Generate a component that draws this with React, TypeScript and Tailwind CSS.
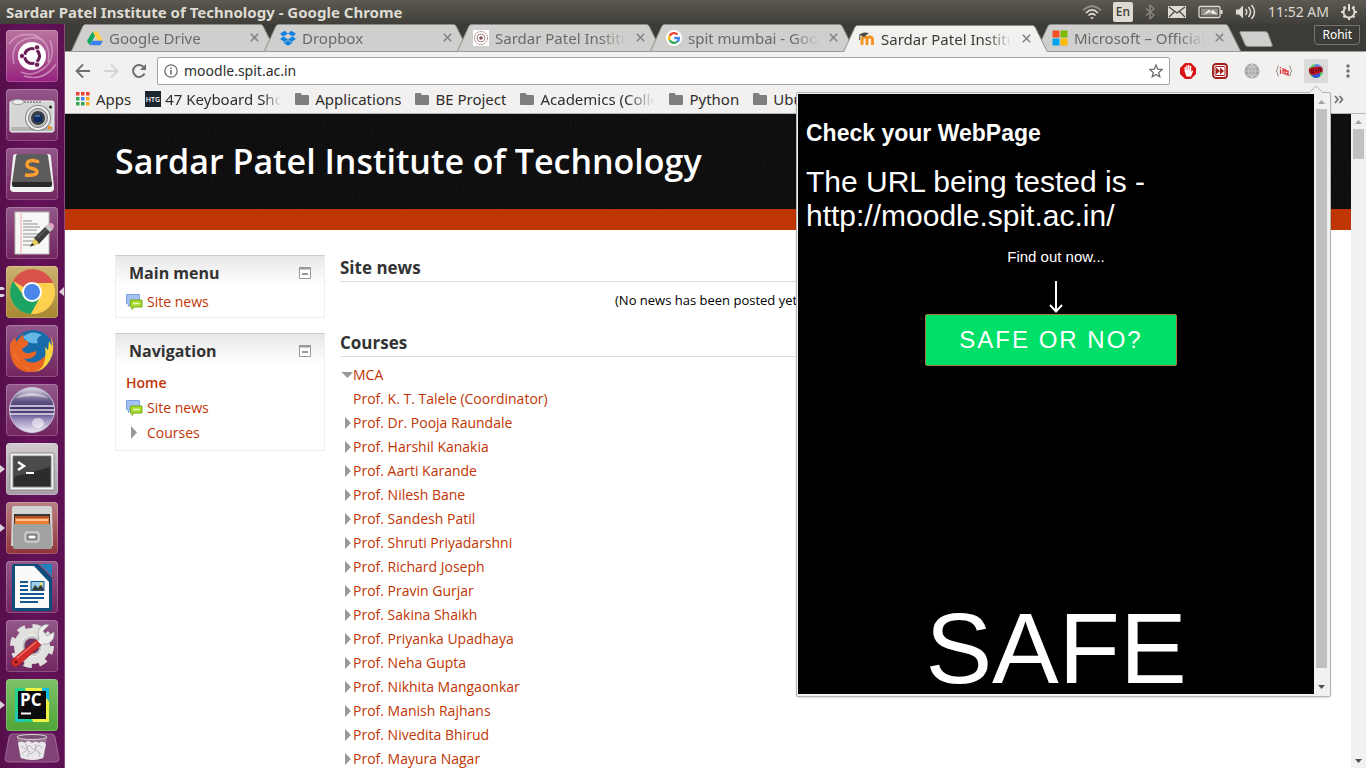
import type { ReactNode } from 'react';
import clsx from 'clsx';

const PROFESSORS = [
  'Prof. Dr. Pooja Raundale',
  'Prof. Harshil Kanakia',
  'Prof. Aarti Karande',
  'Prof. Nilesh Bane',
  'Prof. Sandesh Patil',
  'Prof. Shruti Priyadarshni',
  'Prof. Richard Joseph',
  'Prof. Pravin Gurjar',
  'Prof. Sakina Shaikh',
  'Prof. Priyanka Upadhaya',
  'Prof. Neha Gupta',
  'Prof. Nikhita Mangaonkar',
  'Prof. Manish Rajhans',
  'Prof. Nivedita Bhirud',
  'Prof. Mayura Nagar',
];

export default function App() {
  return (
    <div className="flex h-screen flex-col overflow-hidden bg-[#3c3b37] font-['Noto_Sans','Open_Sans',sans-serif]">
      <TitleBar />
      <div className="flex min-h-0 flex-1">
        <Launcher />
        <div className="relative flex min-w-0 flex-1 flex-col">
          <TabStrip />
          <Toolbar />
          <BookmarksBar />
          <div className="flex min-h-0 flex-1 bg-white">
            <MoodlePage />
            <Scrollbar>
              <div className="h-[30px] w-[11px] bg-[#c1c1c1]" />
            </Scrollbar>
          </div>
          <ExtensionPopup />
        </div>
      </div>
    </div>
  );
}

/* ---------- desktop panel ---------- */

function TitleBar() {
  return (
    <header className="flex h-6 shrink-0 items-center justify-between bg-linear-to-b from-[#5b5950] to-[#403f3a] pr-2 pl-1.5 text-[#dfdbd2]">
      <h1 className="text-[15px] leading-6 font-bold">Sardar Patel Institute of Technology - Google Chrome</h1>
      <div className="flex items-center gap-[11px]">
        <svg width="20" height="16" viewBox="0 0 20 16" fill="none" stroke="currentColor" strokeWidth="1.7">
          <path d="M1 6.5Q10-2 19 6.5" opacity=".45" />
          <path d="M4 9Q10 3 16 9" />
          <path d="M6.5 11.5Q10 8 13.5 11.5" />
          <path d="M8 13.2h4L10 15.5z" fill="currentColor" stroke="none" />
        </svg>
        <span className="flex h-5 w-5 items-center justify-center rounded-xs bg-[#dfdbd2] text-[12px] font-medium text-[#3c3b37]">En</span>
        <svg width="12" height="16" viewBox="0 0 12 16" fill="none" stroke="#8c8a82" strokeWidth="1.3">
          <path d="M2 4.5l8 6.5-4 4V1l4 4-8 6.5" />
        </svg>
        <svg width="20" height="14" viewBox="0 0 20 14">
          <rect x="1" y="1" width="18" height="12" fill="#dfdbd2" />
          <path d="M2 2l8 6 8-6M2 12l5.500-5.500M18 12l-5.500-5.500" fill="none" stroke="#4a4943" strokeWidth="1.3" />
        </svg>
        <svg width="26" height="14" viewBox="0 0 26 14" fill="none">
          <rect x="1" y="1.500" width="21" height="11" rx="1.500" stroke="#dfdbd2" strokeWidth="1.300" />
          <path d="M23.500 5v4" stroke="#dfdbd2" strokeWidth="2" />
          <rect x="3" y="3.500" width="17" height="7" fill="#8f8d86" />
          <path d="M5 10l6-5.500 2.500 2.500 1-2.500 5 5-6-1-1-1.500z" fill="#f3f0e8" />
        </svg>
        <svg width="22" height="16" viewBox="0 0 22 16" fill="none" stroke="#dfdbd2" strokeWidth="1.500">
          <path d="M1 5.500h3l4-4v13l-4-4H1z" fill="#dfdbd2" stroke="none" />
          <path d="M10.500 5q2.500 3 0 6M13.500 3q4 5 0 10M16.500 1q6 7 0 14" />
        </svg>
        <time className="text-[14px] leading-6">11:52 AM</time>
        <svg width="18" height="18" viewBox="0 0 18 18" fill="none" stroke="#dfdbd2">
          <path d="M6 4.400a5.500 5.500 0 1 0 6 0" strokeWidth="2" />
          <path d="M9 1v7" strokeWidth="2" />
          <path d="M3.600 3.600l1.500 1.500M14.400 3.600l-1.500 1.500M1 9h2.500M14.500 9H17M3.600 14.400l1.500-1.500M14.400 14.400l-1.500-1.500M9 14v3" strokeWidth="2.200" />
        </svg>
      </div>
    </header>
  );
}

/* ---------- launcher ---------- */

function Launcher() {
  return (
    <nav aria-label="Launcher" className="flex w-[65px] shrink-0 flex-col items-center border-r border-[#8b4b7e] bg-linear-to-r from-[#560f4b] via-[#65125a] to-[#5c1052] pt-1.5">
      <div className="flex flex-col gap-[7px]">
        <Tile label="Dash" className="bg-linear-to-b from-[#b9749f] to-[#97207f]"><DashIcon /></Tile>
        <Tile label="Camera"><CameraIcon /></Tile>
        <Tile label="Sublime Text"><SublimeIcon /></Tile>
        <Tile label="Text editor"><EditorIcon /></Tile>
        <Tile label="Chrome" windows={2} focused className="bg-linear-to-b from-[#cbb26f] to-[#a8872f]"><ChromeIcon /></Tile>
        <Tile label="Firefox"><FirefoxIcon /></Tile>
        <Tile label="Eclipse"><EclipseIcon /></Tile>
        <Tile label="Terminal" windows={1} className="bg-linear-to-b from-[#d1cbd0] to-[#a79fa6]"><TerminalIcon /></Tile>
        <Tile label="Files" windows={1} className="bg-linear-to-b from-[#b88084] to-[#8f3339]"><FilesIcon /></Tile>
        <Tile label="Writer"><WriterIcon /></Tile>
        <Tile label="Settings"><SettingsIcon /></Tile>
        <Tile label="PyCharm" windows={1} className="bg-linear-to-b from-[#7fc069] to-[#4fa535]"><PyCharmIcon /></Tile>
      </div>
      <button type="button" aria-label="Trash" className="mt-0.5">
        <svg width="56" height="30" viewBox="0 0 56 30" className="block">
          <path d="M8 1h40q2 0 3 3l4 22q0 3-3 3H4q-3 0-3-3L5 4q1-3 3-3z" fill="#814277" stroke="#9c6593" />
          <path d="M13 4l3 21q12 4 24 0l3-21z" fill="#a58aa0" opacity=".7" />
          <ellipse cx="28" cy="4" rx="15" ry="2.500" fill="#75506e" stroke="#dcd3da" />
          <path d="M14 10q3-3 7 0 3-4 7 0 4-3 7 0 4-3 7 1l-3 14q-10 4-22 0z" fill="#e9e7e9" />
          <path d="M17 13l5 3 3-4 5 5 5-5 3 3M18 21l5-4 4 4 5-4 5 4M22 11l2 6M32 11l-1 7M26 18l-3 6M34 18l2 6" fill="none" stroke="#bcb7bc" />
        </svg>
      </button>
    </nav>
  );
}

function Tile({
  label,
  windows = 0,
  focused = false,
  className = 'bg-linear-to-b from-[#93588a] to-[#71245f]',
  children,
}: {
  label: string;
  windows?: number;
  focused?: boolean;
  className?: string;
  children: ReactNode;
}) {
  return (
    <div className="relative">
      <button type="button" aria-label={label} className={clsx('block size-[52px] rounded-sm inset-ring inset-ring-white/20', className)}>
        <svg width="52" height="52" viewBox="0 0 52 52" className="block">{children}</svg>
      </button>
      {windows > 0 ? (
        <svg width="5" height="14" viewBox="0 0 5 14" className="absolute top-[19px] -left-1.5" fill="#dcd3da">
          {windows === 1 ? <path d="M0 3l5 4-5 4z" /> : <path d="M0 2h3l2 2-2 1H0zM0 9h3l2 1-2 2H0z" />}
        </svg>
      ) : null}
      {focused ? (
        <svg width="5" height="10" viewBox="0 0 5 10" className="absolute top-[21px] -right-1.5" fill="#dcd3da">
          <path d="M5 0v9L0 5z" />
        </svg>
      ) : null}
    </div>
  );
}

function DashIcon() {
  return (
    <>
      <g fill="none" stroke="#e3b9d6" strokeWidth="1.500" opacity=".6">
        <path d="M8 34Q3 12 24 8Q34 7 39 13M44 10Q52 32 32 42Q24 46 15 42M3 14Q10 2 28 5Q46 12 42 32M50 34Q38 52 18 46" />
      </g>
      <circle cx="26" cy="26" r="14" fill="#fff" />
      <circle cx="26" cy="26" r="7.500" fill="none" stroke="#6b1b55" strokeWidth="3.200" />
      <path d="M26 26L14 26M26 26L32 36.400M26 26L32 15.600" stroke="#fff" strokeWidth="2" />
      <circle cx="26" cy="26" r="5.500" fill="#fff" />
      <g fill="#6b1b55" stroke="#fff" strokeWidth=".8">
        <circle cx="16" cy="26" r="2.600" />
        <circle cx="31" cy="17.300" r="2.600" />
        <circle cx="31" cy="34.700" r="2.600" />
      </g>
    </>
  );
}

function CameraIcon() {
  return (
    <>
      <rect x="4" y="12" width="44" height="31" rx="2" fill="#d6d6d4" stroke="#f4f4f4" />
      <path d="M5 38h42v4H5z" fill="#b4b4b2" />
      <ellipse cx="12" cy="13" rx="6" ry="2.500" fill="#eee" stroke="#999" />
      <path d="M18 13h18" stroke="#555" strokeDasharray="2 1" />
      <circle cx="32" cy="29" r="12.500" fill="#f0f0ef" stroke="#8c8c8b" strokeWidth="1.200" />
      <circle cx="32" cy="29" r="9.500" fill="#c2c2c2" stroke="#777" />
      <circle cx="32" cy="29" r="7" fill="#3a3d42" />
      <rect x="28" y="26" width="8" height="7" rx="1" fill="#0d2c63" />
      <path d="M29 27h5" stroke="#79a7df" />
      <circle cx="44.500" cy="18" r="1.500" fill="#222" />
      <rect x="42" y="37" width="3" height="3" fill="#f3901d" />
    </>
  );
}

function SublimeIcon() {
  return (
    <>
      <path d="M7 9q0-3 3-3h32q3 0 3 3l3 31q0 4-4 4H8q-4 0-4-4z" fill="#f1f1f1" />
      <path d="M10 8q0-2 2-2h28q2 0 2 2l4 27H6z" fill="#5c5c5c" />
      <path d="M6 34h40v3q0 2-2 2H8q-2 0-2-2z" fill="#292929" />
      <path d="M33 13q-2 1-5-.5-7-.5-7 4 0 3 5 4 5 1 5 3.500 0 4-12 3" fill="none" stroke="#ff9f2f" strokeWidth="3.400" />
    </>
  );
}

function EditorIcon() {
  return (
    <>
      <rect x="9" y="5" width="34" height="42" fill="#f7f7f5" stroke="#bdbab6" />
      <path d="M15 6v40" stroke="#f2a5a5" />
      <path d="M17 14h9M17 17h15M17 20h17M17 23h14M17 27h16M17 30h13M17 34h10M17 38h12" stroke="#8f8f8f" strokeWidth="1" />
      <path d="M25 39l3-8 4 3 2 3z" fill="#e9ca58" />
      <path d="M28 31l12-12 5 5-12 13-2-3z" fill="#3e3e3c" />
      <path d="M31 31l11-10" stroke="#777" />
      <path d="M39 20l3-3 5 5-3 3z" fill="#c9c9c9" />
      <path d="M42 17q3-2 5 0t0 5z" fill="#e6a4c8" />
      <path d="M24 40l2-4 2 2z" fill="#222" />
    </>
  );
}

function ChromeIcon() {
  return (
    <>
      <circle cx="26" cy="26" r="22" fill="#fdd04f" />
      <path d="M26 26L7 15A22 22 0 0 1 47 17H26z" fill="#d9534c" />
      <path d="M7 15A22 22 0 0 0 25 48L34 31 18 30z" fill="#1da462" />
      <path d="M26 17h21A22 22 0 0 1 25 48l10-17z" fill="#fdd04f" />
      <circle cx="26" cy="26" r="10" fill="#fff" />
      <circle cx="26" cy="26" r="8" fill="#4a86ea" />
    </>
  );
}

function FirefoxIcon() {
  return (
    <>
      <circle cx="27" cy="25" r="20" fill="#176bab" />
      <path d="M17 12Q26 4 36 10Q29 13 32 18Q22 20 17 12z" fill="#65b8e4" />
      <path d="M45 11q5 14-1 24-6 12-18 12 16-6 13-25l3 3 1-9 3 5z" fill="#fbd53c" />
      <path d="M4 19l5-7 1 5 7-8 1 6q5 0 4 5l-6 4q1 5 8 4l6-2q1 5-5 7-5 2-8 0 10 10 22-2 0 17-18 16Q3 44 4 19z" fill="#eb6423" />
      <path d="M7 23q2 17 18 22-10-2-14-11-3-5-4-11z" fill="#f8993a" />
    </>
  );
}

function EclipseIcon() {
  return (
    <>
      <defs>
        <linearGradient id="eclipse" x2="0" y2="1">
          <stop offset="0" stopColor="#dedbe8" />
          <stop offset=".3" stopColor="#645787" />
          <stop offset=".5" stopColor="#382c63" />
          <stop offset=".7" stopColor="#9489b8" />
          <stop offset="1" stopColor="#eeeaf5" />
        </linearGradient>
      </defs>
      <circle cx="26" cy="26" r="22.500" fill="url(#eclipse)" stroke="#cdc7db" />
      <path d="M4 22h44M4 26h44M4 30h44" stroke="#e6e1f0" strokeWidth="1.600" />
      <path d="M10 14q15-10 32 0-16-4-32 0z" fill="#fff" opacity=".5" />
      <ellipse cx="32" cy="39" rx="6" ry="5" fill="#fff" opacity=".55" />
    </>
  );
}

function TerminalIcon() {
  return (
    <>
      <rect x="4" y="10" width="44" height="37" rx="1.500" fill="#f5f5f5" stroke="#878787" />
      <rect x="7" y="13" width="38" height="31" fill="#2c2c2c" stroke="#888" />
      <path d="M8 14h36v10L8 34z" fill="#4a4a4a" />
      <path d="M12 19l6 4-6 4" fill="none" stroke="#fff" strokeWidth="2.400" />
      <path d="M20 30h8" stroke="#fff" strokeWidth="2" />
    </>
  );
}

function FilesIcon() {
  return (
    <>
      <path d="M6 6q0-2 2-2h36q2 0 2 2l1 38H5z" fill="#d2d2d0" />
      <rect x="8" y="12" width="36" height="12" fill="#3b3634" />
      <path d="M9 14h34v9H9z" fill="#a75327" />
      <path d="M9 16h34v8H9z" fill="#ef7d2d" />
      <path d="M10 18h32" stroke="#fff" />
      <path d="M7 22h38l1 23q0 2-2 2H9q-2 0-2-2z" fill="#a1a1a0" />
      <rect x="19" y="30" width="14" height="10" rx="2" fill="#ababaa" stroke="#e5e5e4" />
      <rect x="22" y="33" width="8" height="4" fill="#fff" stroke="#555" />
    </>
  );
}

function WriterIcon() {
  return (
    <>
      <path d="M8 3h24l14 14v31q0 2-2 2H8q-2 0-2-2V5q0-2 2-2z" fill="#0f4c7e" />
      <path d="M9 5h19l15 16v26H9z" fill="#fafafa" />
      <path d="M34 3h12v12z" fill="#1d82bd" />
      <path d="M14 21h8M14 25h8M14 29h8M14 33h24M14 37h24M14 41h18" stroke="#14588f" strokeWidth="2" />
      <rect x="25" y="20.500" width="13" height="9" fill="#9ccdea" stroke="#14588f" />
      <path d="M26 29l3-5 3 3 3-4 3 6z" fill="#373b38" />
      <circle cx="35" cy="23" r="1.500" fill="#fbe14b" />
    </>
  );
}

function SettingsIcon() {
  return (
    <>
      <circle cx="26" cy="26" r="19.500" fill="none" stroke="#e0e0de" strokeWidth="5" strokeDasharray="8 7.300" />
      <circle cx="26" cy="26" r="13.500" fill="none" stroke="#e0e0de" strokeWidth="9" />
      <circle cx="26" cy="26" r="11" fill="#cfcfcd" stroke="#f4f4f3" />
      <circle cx="26" cy="26" r="8" fill="#713364" stroke="#aaa" />
      <path d="M29 24l4-5q-3-9 3-13 4-3 7-1l-6 6 4 5 7-4q1 8-5 11-3 2-6 1l-5 4z" fill="#ececec" stroke="#999" strokeWidth=".7" />
      <path d="M30 20l5 5-22 20q-4 3-7 0-2-3 1-6z" fill="#d32c2c" stroke="#9f1b1b" strokeWidth=".7" />
      <path d="M11 38l19-16" stroke="#f0766e" strokeWidth="1.500" />
      <circle cx="10" cy="42" r="1.500" fill="#6a1010" />
    </>
  );
}

function PyCharmIcon() {
  return (
    <>
      <rect x="9" y="9" width="34" height="34" fill="#21d18d" />
      <path d="M19 9h19l5 14v20H27z" fill="#eef043" />
      <path d="M36 9h7v13l-7-7z" fill="#12b8e5" />
      <path d="M9 31l10 12H9z" fill="#21c6bd" />
      <rect x="12" y="12" width="28" height="28" fill="#0b0b0b" />
      <text x="14" y="27" fill="#fff" fontFamily="Open Sans" fontSize="17" fontWeight="700">PC</text>
      <path d="M15 34.500h10" stroke="#fff" strokeWidth="2" />
    </>
  );
}

/* ---------- browser chrome ---------- */

function TabStrip() {
  return (
    <div className="flex h-7 shrink-0 items-end justify-between border-b border-[#9b9b99] pr-1.5 pl-1.5">
      <div className="flex items-end">
        <Tab title="Google Drive"><DriveIcon /></Tab>
        <Tab title="Dropbox"><DropboxIcon /></Tab>
        <Tab title="Sardar Patel Institute">
          <rect width="16" height="16" fill="#fff" />
          <g fill="none" stroke="#a98686">
            <circle cx="8" cy="8" r="6.500" strokeDasharray="2 .6" />
            <circle cx="8" cy="8" r="4" />
          </g>
          <circle cx="8" cy="8" r="1.800" fill="#854d4d" />
        </Tab>
        <Tab title="spit mumbai - Google"><GoogleIcon /></Tab>
        <Tab title="Sardar Patel Institute" active><MoodleIcon /></Tab>
        <Tab title="Microsoft – Official">
          <path d="M.5.500h7v7h-7z" fill="#f25022" />
          <path d="M8.500.500h7v7h-7z" fill="#7fba00" />
          <path d="M.5 8.500h7v7h-7z" fill="#00a4ef" />
          <path d="M8.500 8.500h7v7h-7z" fill="#ffb900" />
        </Tab>
        <button type="button" aria-label="New tab" className="mb-1 ml-2.5">
          <svg width="34" height="16" viewBox="0 0 34 16" className="block">
            <path d="M2 .5h24q2 0 3 2l4 11q1 2-1 2H9q-2 0-3-2L1 2Q.5.500 2 .5z" fill="#d0cfcd" stroke="#8e8d8a" />
          </svg>
        </button>
      </div>
      <button type="button" className="mb-1.5 h-5 rounded-b-sm border border-[#77766f] bg-[#3c3b37] px-[7px] text-[12px] leading-[18px] text-white">
        Rohit
      </button>
    </div>
  );
}

function Tab({ title, active = false, children }: { title: string; active?: boolean; children: ReactNode }) {
  return (
    <div className={clsx('relative -mr-3 flex h-[27px] w-[205px] items-center pr-[17px] pl-4', active && 'z-10 -mb-px h-7')}>
      <svg viewBox="0 0 205 28" preserveAspectRatio="none" className="absolute inset-0 size-full">
        <path d="M.5 28L12 2Q13 .5 15 .5h174q2 0 3 1.500L204.500 28" fill={active ? '#f2f1f0' : '#d0cfcd'} stroke="#8e8d8a" />
      </svg>
      <svg width="16" height="16" viewBox="0 0 16 16" className="relative shrink-0">{children}</svg>
      <span className={clsx('relative ml-1.5 w-[131px] overflow-hidden mask-r-from-80% text-[15px] leading-5 whitespace-nowrap', active ? 'text-[#3c3b37]' : 'text-[#6b6a68]')}>
        {title}
      </span>
      <button type="button" aria-label="Close tab" className="relative ml-auto">
        <svg width="9" height="9" viewBox="0 0 9 9" stroke="#858483" strokeWidth="1.600" className="block">
          <path d="M.8.800l7.400 7.400M8.200.800L.8 8.200" />
        </svg>
      </button>
    </div>
  );
}

function DriveIcon() {
  return (
    <>
      <path d="M5.500 1.500h5L16 11h-5z" fill="#ffcf48" />
      <path d="M5.500 1.500L8 6 2.700 15.200 0 11z" fill="#11a861" />
      <path d="M5.300 10.800H16l-2.600 4.400H2.700z" fill="#3e82f1" />
    </>
  );
}

function DropboxIcon() {
  return (
    <path
      d="M4.700.800L0 3.800l3.300 2.600L8 3.500zM11.300.800L8 3.500l4.700 2.900L16 3.800zM0 9l4.700 3L8 9.300 3.300 6.400zM8 9.300l3.300 2.700L16 9l-3.300-2.600zM8 10l-3.300 2.700-1.400-.9v1L8 15.700l4.700-2.900v-1l-1.400.9z"
      fill="#1081de"
    />
  );
}

function GoogleIcon() {
  return (
    <>
      <circle cx="8" cy="8" r="8" fill="#fff" />
      <g fill="none" strokeWidth="2.400">
        <path d="M11.500 4.500A4.900 4.900 0 0 0 3.700 5.800" stroke="#ea4335" />
        <path d="M3.700 5.700a4.900 4.900 0 0 0 0 4.600" stroke="#fbbc05" />
        <path d="M3.700 10.200A4.900 4.900 0 0 0 11.200 11.700" stroke="#34a853" />
        <path d="M11.200 11.700Q13 10.200 12.900 8H8.200" stroke="#4285f4" />
      </g>
    </>
  );
}

function MoodleIcon() {
  return (
    <>
      <path d="M3 14V8q0-2 2.500-2T8 8.500V14M8 14V8.500Q8 6 10.700 6t2.800 2.500V14" fill="none" stroke="#f2941c" strokeWidth="2.800" />
      <path d="M0 3.500L5 1.500l5 .5-5 4z" fill="#4a4a48" />
      <path d="M1 4l-.5 5" stroke="#4a4a48" />
    </>
  );
}

function Toolbar() {
  return (
    <div className="flex h-[37px] shrink-0 items-center bg-[#f2f1f0] pr-1.5 pl-[10px]">
      <div className="flex shrink-0 items-center gap-3 pr-[10px]">
        <button type="button" aria-label="Back">
          <svg width="16" height="16" viewBox="0 0 16 16" fill="none" stroke="#6f6e6c" strokeWidth="1.800" className="block">
            <path d="M15 8H2M8 1.500L1.500 8 8 14.500" />
          </svg>
        </button>
        <button type="button" aria-label="Forward">
          <svg width="16" height="16" viewBox="0 0 16 16" fill="none" stroke="#d5d4d2" strokeWidth="1.800" className="block">
            <path d="M1 8h13M8 1.500L14.500 8 8 14.500" />
          </svg>
        </button>
        <button type="button" aria-label="Reload">
          <svg width="16" height="16" viewBox="0 0 16 16" fill="none" stroke="#6f6e6c" strokeWidth="2" className="block">
            <path d="M13.500 10.500A6 6 0 1 1 13 4.500" />
            <path d="M15 1v6H9z" fill="#6f6e6c" stroke="none" />
          </svg>
        </button>
      </div>
      <label className="flex h-7 min-w-0 flex-1 items-center rounded-xs border border-[#a5a4a2] bg-white px-1.5">
        <svg width="14" height="14" viewBox="0 0 14 14" fill="none" stroke="#6f6e6c" className="shrink-0">
          <circle cx="7" cy="7" r="6.200" strokeWidth="1.300" />
          <path d="M7 6v4.500M7 3.500v1.400" strokeWidth="1.600" />
        </svg>
        <input
          type="text"
          aria-label="Address"
          defaultValue="moodle.spit.ac.in"
          className="ml-1.5 min-w-0 flex-1 text-[14px] leading-5 text-[#2e2e2c] outline-none"
        />
        <svg width="14" height="14" viewBox="0 0 14 14" fill="none" stroke="#6f6e6c" strokeWidth="1.300" className="shrink-0">
          <path d="M7 1l1.700 4.200 4.500.3-3.500 2.900 1.100 4.400L7 10.400l-3.800 2.400 1.100-4.400L.8 5.500l4.500-.3z" />
        </svg>
      </label>
      <div className="ml-1.5 flex shrink-0 items-center gap-2">
        <Extension label="Ad blocker">
          <path d="M5 0h6l5 5v6l-5 5H5l-5-5V5z" fill="#da1414" />
          <path d="M4.500 8V4h1.300v3h.4V2.500h1.400V7H8V2h1.400v5h.4V3h1.400v6l1-1.500 1 .5-2.200 5.500H6.500z" fill="#fff" />
        </Extension>
        <Extension label="Skip">
          <rect x="1" y="1" width="14" height="14" rx="3" fill="#fff" stroke="#a31c1c" strokeWidth="1.800" />
          <rect x="3" y="3.500" width="10" height="9" rx="1" fill="#fff" stroke="#a31c1c" />
          <path d="M4 4.500l4 3.500-4 3.500zM8 4.500l4 3.500-4 3.500z" fill="#a31c1c" />
        </Extension>
        <Extension label="Web">
          <circle cx="8" cy="8" r="7.500" fill="#a4a4a3" />
          <path d="M1 8h14M8 1v14M2.500 4h11M2.500 12h11M8 .5q-7 7.500 0 15 7-7.500 0-15" fill="none" stroke="#cfcfce" />
        </Extension>
        <Extension label="Snippets">
          <path d="M3 3Q1.500 3 1.500 5t-1.300 3q1.300 1 1.300 3T3 13M13 3q1.500 0 1.500 2t1.300 3q-1.300 1-1.300 3T13 13" fill="none" stroke="#8d8d8c" />
          <path d="M4.500 6.500V11M4.500 4v1.300M7 5v6M7 8l3-2M9 8h3v3H9zM12 11v2" fill="none" stroke="#e0383f" strokeWidth="1.300" />
        </Extension>
        <Extension label="Safe or no" selected>
          <circle cx="8" cy="8" r="7" fill="#4bd35a" />
          <path d="M8 1a7 7 0 0 1 7 7v2L6 3z" fill="#6d86f4" />
          <path d="M3 11l2 3q3 2 7-.5L12 9z" fill="#3154dd" />
          <path d="M1 5.500q6-3 13-1.500l1 4q-5 4-12 4-3-3-2-6.500z" fill="#c21626" />
          <path d="M3 6.500l3-.5M3 8l3-.5M3 9.800l3-.5M3.200 6.500v3M8.200 5.500l-.5 4M10.500 9V5.500q2-1 2 0V9" fill="none" stroke="#5e0712" />
        </Extension>
        <button type="button" aria-label="Menu" className="flex size-6 items-center justify-center">
          <svg width="4" height="14" viewBox="0 0 4 14" fill="#6f6e6c" className="block">
            <circle cx="2" cy="2" r="1.700" />
            <circle cx="2" cy="7" r="1.700" />
            <circle cx="2" cy="12" r="1.700" />
          </svg>
        </button>
      </div>
    </div>
  );
}

function Extension({ label, selected = false, children }: { label: string; selected?: boolean; children: ReactNode }) {
  return (
    <button type="button" aria-label={label} className={clsx('flex size-6 items-center justify-center rounded-xs', selected && 'bg-[#dbdad9]')}>
      <svg width="16" height="16" viewBox="0 0 16 16" className="block">{children}</svg>
    </button>
  );
}

function BookmarksBar() {
  return (
    <div className="flex h-[25px] shrink-0 items-center justify-between border-b border-[#b6b5b3] bg-[#f2f1f0] pr-[22px] pb-1 pl-[11px] text-[15px] leading-5 text-[#2e2e2c]">
      <div className="flex items-center gap-[14px]">
        <a href="#apps" className="flex items-center gap-1.5">
          <svg width="14" height="14" viewBox="0 0 14 14" className="block">
            <path d="M0 0h3.500v3.500H0zM5 0h3.500v3.500H5zM10 0h3.500v3.500H10z" fill="#ea4335" />
            <path d="M0 5h3.500v3.500H0zM0 10h3.500v3.500H0zM5 10h3.500v3.500H5z" fill="#34a853" />
            <path d="M5 5h3.500v3.500H5z" fill="#4285f4" />
            <path d="M10 5h3.500v3.500H10zM10 10h3.500v3.500H10z" fill="#fbae17" />
          </svg>
          Apps
        </a>
        <a href="#htg" className="flex w-[136px] items-center gap-1">
          <svg width="16" height="16" viewBox="0 0 16 16" className="block shrink-0">
            <rect width="16" height="16" fill="#1b2530" />
            <text x="8" y="11" fill="#fff" textAnchor="middle" fontFamily="Open Sans" fontSize="7" fontWeight="600">HTG</text>
          </svg>
          <span className="overflow-hidden mask-r-from-85% whitespace-nowrap">47 Keyboard Shortcuts</span>
        </a>
        <Folder name="Applications" />
        <Folder name="BE Project" />
        <Folder name="Academics (College)" className="w-[135px]" fade />
        <Folder name="Python" />
        <Folder name="Ubuntu" />
      </div>
      <button type="button" aria-label="More bookmarks">
        <svg width="10" height="9" viewBox="0 0 10 9" fill="none" stroke="#6f6e6c" strokeWidth="1.700" className="block">
          <path d="M1 1l3 3.500L1 8M5.500 1l3 3.500-3 3.500" />
        </svg>
      </button>
    </div>
  );
}

function Folder({ name, className, fade = false }: { name: string; className?: string; fade?: boolean }) {
  return (
    <a href="#folder" className={clsx('flex items-center gap-1.5', className)}>
      <svg width="14" height="12" viewBox="0 0 14 12" fill="#7f7e7c" className="block shrink-0">
        <path d="M1 0h4.500L7 2h6q1 0 1 1v8q0 1-1 1H1q-1 0-1-1V1q0-1 1-1z" />
      </svg>
      <span className={clsx('overflow-hidden whitespace-nowrap', fade && 'mask-r-from-75%')}>{name}</span>
    </a>
  );
}

function Scrollbar({ children }: { children: ReactNode }) {
  return (
    <div className="flex w-[15px] shrink-0 flex-col items-center bg-[#f1f1f1]">
      <svg width="15" height="15" viewBox="0 0 15 15" fill="#a3a3a3" className="block shrink-0">
        <path d="M4 10h7L7.500 6z" />
      </svg>
      <div className="flex min-h-0 flex-1 flex-col">{children}</div>
      <svg width="15" height="15" viewBox="0 0 15 15" fill="#505050" className="block shrink-0">
        <path d="M4 6h7l-3.500 4z" />
      </svg>
    </div>
  );
}

/* ---------- moodle page ---------- */

function MoodlePage() {
  return (
    <div className="min-w-0 flex-1 overflow-hidden text-[14px] font-['Open_Sans',sans-serif]">
      <div className="relative border-b-[21px] border-[#bf3504] bg-[#080808]">
        <svg className="absolute inset-0 size-full opacity-8">
          <filter id="grain">
            <feTurbulence type="fractalNoise" baseFrequency=".6" numOctaves="2" />
            <feColorMatrix type="saturate" values="0" />
          </filter>
          <rect width="100%" height="100%" filter="url(#grain)" />
        </svg>
        <h2 className="relative px-[50px] pt-[23px] pb-6 text-[34px] leading-12 font-semibold text-white">
          Sardar Patel Institute of Technology
        </h2>
      </div>
      <div className="flex gap-[15px] px-[50px] pt-[25px]">
        <aside className="flex w-[210px] shrink-0 flex-col gap-[15px]">
          <Block title="Main menu">
            <a href="#news" className="flex items-center gap-1 leading-5"><ForumIcon />Site news</a>
          </Block>
          <Block title="Navigation">
            <ul className="leading-[25px]">
              <li><a href="#home" className="font-semibold">Home</a></li>
              <li><a href="#news" className="flex items-center gap-1"><ForumIcon />Site news</a></li>
              <li>
                <a href="#courses" className="flex items-center gap-1">
                  <svg width="17" height="13" viewBox="0 0 17 13" fill="#999" className="block"><path d="M5 0l6 6.500L5 13z" /></svg>
                  Courses
                </a>
              </li>
            </ul>
          </Block>
        </aside>
        <main className="min-w-0 flex-1">
          <SectionTitle>Site news</SectionTitle>
          <p className="pt-2 pb-5 text-center text-[13px] leading-5 text-black">(No news has been posted yet)</p>
          <SectionTitle>Courses</SectionTitle>
          <ul className="pt-1.5 leading-6 text-[#c03504]">
            <li className="flex items-center">
              <svg width="13" height="6" viewBox="0 0 13 6" fill="#999" className="block"><path d="M1.500 0H13L7.500 6z" /></svg>
              <a href="#mca">MCA</a>
            </li>
            <li className="pl-[13px]"><a href="#talele">Prof. K. T. Talele (Coordinator)</a></li>
            {PROFESSORS.map((name) => (
              <li key={name} className="flex items-center">
                <svg width="13" height="12" viewBox="0 0 13 12" fill="#999" className="block"><path d="M5 0l6 6-6 6z" /></svg>
                <a href="#course">{name}</a>
              </li>
            ))}
          </ul>
        </main>
        <aside className="w-[210px] shrink-0" />
      </div>
    </div>
  );
}

function SectionTitle({ children }: { children: ReactNode }) {
  return <h3 className="border-b border-[#ddd] text-[17px] leading-[26px] font-bold text-[#333]">{children}</h3>;
}

function Block({ title, children }: { title: string; children: ReactNode }) {
  return (
    <section className="border border-[#eee] border-t-[#ccc] bg-linear-to-b from-[#e8e8e8] to-white to-[30px] px-[10px] pb-[5px] text-[#c03504]">
      <div className="flex items-center justify-between px-[3px] pt-[3px] pb-[5px]">
        <h3 className="text-[16px] leading-[28px] font-bold text-[#333]">{title}</h3>
        <button type="button" aria-label="Collapse">
          <svg width="12" height="12" viewBox="0 0 12 12" className="block">
            <path d="M.5.500h11v11H.5z" fill="#fff" stroke="#999" />
            <path d="M0 1.500h12M3 7h6" stroke="#999" strokeWidth="2" />
          </svg>
        </button>
      </div>
      {children}
    </section>
  );
}

function ForumIcon() {
  return (
    <svg width="17" height="16" viewBox="0 0 17 16" className="block shrink-0">
      <path d="M.5.500h13v9h-9l-2 3-.5-3H.5z" fill="#a3c2f2" stroke="#7da5e4" />
      <path d="M4.500 6h11.500v7H8l-2 2.500V13H4.500z" fill="#a6d92c" stroke="#79ae14" />
      <path d="M7 9.500h6.500" stroke="#e9fbc4" strokeWidth="1.500" />
    </svg>
  );
}

/* ---------- extension popup ---------- */

function ExtensionPopup() {
  return (
    <div className="absolute top-[68px] right-[35px] z-20 flex h-[605px] w-[535px] rounded-xs border border-[#b5b4b2] bg-[#f2f1f0] p-px pb-0.5 font-['Liberation_Sans',Arial,sans-serif] text-white shadow-sm">
      <svg width="16" height="8" viewBox="0 0 16 8" className="absolute -top-2 right-1.5">
        <path d="M1 8l7-7 7 7" fill="#f2f1f0" stroke="#b5b4b2" />
      </svg>
      <div className="flex min-w-0 flex-1 flex-col overflow-hidden bg-black px-2">
        <h2 className="pt-[27px] text-[23px] leading-6 font-bold">Check your WebPage</h2>
        <p className="pt-5 text-[30px] leading-[34px]">
          The URL being tested is -<br />http://moodle.spit.ac.in/
        </p>
        <p className="pt-[14px] text-center text-[15px] leading-5">Find out now...</p>
        <svg width="14" height="32" viewBox="0 0 14 32" fill="none" stroke="#fff" strokeWidth="2" className="mt-[14px] self-center">
          <path d="M7 0v30M1 24L7 30.500 13 24" />
        </svg>
        <button type="button" className="mt-px mr-[10px] h-[52px] w-[252px] self-center rounded-xs border border-[#a9783a] bg-[#00e068] text-[24px] tracking-[2px]">
          SAFE OR NO?
        </button>
        <output className="mt-auto text-center text-[100px] leading-[91px]">SAFE</output>
      </div>
      <Scrollbar>
        <div className="mb-[11px] w-[11px] flex-1 bg-[#c1c1c1]" />
      </Scrollbar>
    </div>
  );
}
